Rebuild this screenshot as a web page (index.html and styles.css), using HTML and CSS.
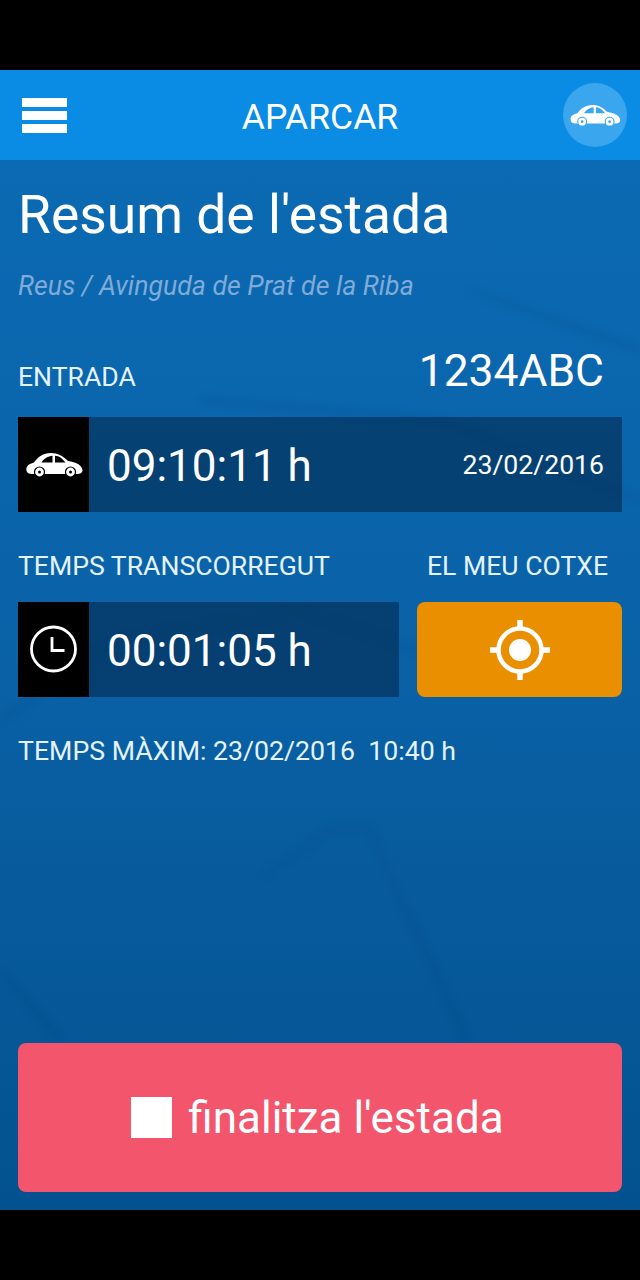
FILE: index.html
```html
<!DOCTYPE html>
<html lang="ca">
<head>
    <meta charset="UTF-8">
    <meta name="viewport" content="width=device-width, initial-scale=1.0">
    <title>Aparcar</title>
    <link rel="stylesheet" href="styles.css">
</head>
<body>

<svg class="defs" width="0" height="0">
    <symbol id="car" viewBox="0 0 58 26">
        <path d="M2 20C0 15 3 12 9 10.500C13 5 18 1 26 1C33 1 38 4 43 9C51 10 57 13 57.500 18C57.500 21 55 22 52 22H7C4 22 3 21 2 20Z" fill="#fff"/>
        <path d="M16.500 10.500C19 6.500 23 4 27.500 3.700V10.500ZM30 3.700C34 4 37 6 40.500 10.500H30Z" fill="var(--glass)"/>
        <circle cx="14.500" cy="20" r="5.600" fill="var(--glass)"/>
        <circle cx="14.500" cy="20" r="4.400" fill="#fff"/>
        <circle cx="14.500" cy="20" r="1.500" fill="var(--glass)"/>
        <circle cx="45.500" cy="20" r="5.600" fill="var(--glass)"/>
        <circle cx="45.500" cy="20" r="4.400" fill="#fff"/>
        <circle cx="45.500" cy="20" r="1.500" fill="var(--glass)"/>
    </symbol>
</svg>

<div class="black-bar top"></div>

<div class="navbar">
    <div class="menu-icon">
        <div></div>
        <div></div>
        <div></div>
    </div>
    <h1>APARCAR</h1>
    <div class="car-badge">
        <svg width="52" height="23"><use href="#car"/></svg>
    </div>
</div>

<div class="content">
    <svg class="map-lines" viewBox="0 0 640 1050" preserveAspectRatio="none">
        <path d="M0 810L60 880M367 667L467 880M260 720L330 670L367 667M470 130L640 190M200 240L440 260L640 340M0 560L120 480L300 450L500 520" fill="none" stroke="#033c6e" stroke-width="5"/>
    </svg>

    <h2 class="title">Resum de l'estada</h2>
    <p class="place">Reus / Avinguda de Prat de la Riba</p>

    <div class="entry-head">
        <span class="label entry-label">ENTRADA</span>
        <span class="plate">1234ABC</span>
    </div>
    <div class="time-box">
        <div class="time-icon">
            <svg width="58" height="26"><use href="#car"/></svg>
        </div>
        <span class="time">09:10:11 h</span>
        <span class="date">23/02/2016</span>
    </div>

    <div class="two-cols">
        <div class="col-left">
            <span class="label">TEMPS TRANSCORREGUT</span>
            <div class="time-box">
                <div class="time-icon">
                    <svg width="50" height="50" viewBox="0 0 50 50">
                        <circle cx="24.500" cy="24" r="22" fill="none" stroke="#fff" stroke-width="2.800"/>
                        <path d="M23 12V25.500H35.500" fill="none" stroke="#fff" stroke-width="2.800"/>
                    </svg>
                </div>
                <span class="time">00:01:05 h</span>
            </div>
        </div>
        <div class="col-right">
            <span class="label">EL MEU COTXE</span>
            <div class="locate-btn">
                <svg width="60" height="60" viewBox="0 0 60 60">
                    <circle cx="30" cy="30" r="21.500" fill="none" stroke="#fff" stroke-width="4.500"/>
                    <circle cx="30" cy="30" r="11" fill="#fff"/>
                    <path d="M30 0V10M30 50V60M0 30H10M50 30H60" stroke="#fff" stroke-width="5.500"/>
                </svg>
            </div>
        </div>
    </div>

    <p class="max-time">TEMPS MÀXIM: 23/02/2016&nbsp; 10:40 h</p>

    <div class="stop-btn">
        <div class="stop-square"></div>
        <span>finalitza l'estada</span>
    </div>
</div>

<div class="black-bar bottom"></div>

</body>
</html>
```

FILE: styles.css
```css
body {
    margin: 0;
    font-family: Roboto, Arial, sans-serif;
    background-color: #000;
    color: #fff;
    height: 1280px;
    display: flex;
    flex-direction: column;
    overflow: hidden;
}
.defs {
    position: absolute;
}
.black-bar.top {
    height: 70px;
}
.black-bar.bottom {
    height: 70px;
}
.navbar {
    height: 90px;
    flex: none;
    background-color: #0a8be4;
    display: flex;
    align-items: center;
    justify-content: space-between;
    padding: 0 13px 0 22px;
    position: relative;
    --glass: #3aa6ee;
}
.navbar h1 {
    margin: 0;
    font-size: 35.5px;
    font-weight: 400;
    position: absolute;
    left: 0;
    right: 0;
    top: 0;
    text-align: center;
    line-height: 94px;
}
.menu-icon {
    width: 45px;
    height: 35px;
    display: flex;
    flex-direction: column;
    justify-content: space-between;
}
.menu-icon div {
    background-color: #fff;
    height: 9px;
}
.car-badge {
    width: 64px;
    height: 64px;
    border-radius: 50%;
    background-color: #3aa6ee;
    display: flex;
    align-items: center;
    justify-content: center;
}
.content {
    flex: 1;
    position: relative;
    background: linear-gradient(#0b6ab3 0%, #0a62a7 45%, #03528f 100%);
    padding: 0 18px;
    display: flex;
    flex-direction: column;
    overflow: hidden;
    --glass: #000;
}
.map-lines {
    position: absolute;
    left: 0;
    top: 0;
    width: 100%;
    height: 100%;
    filter: blur(4px);
    opacity: .18;
}
.content > *:not(.map-lines) {
    position: relative;
}
.title {
    margin: 24px 0 0;
    font-size: 53.4px;
    font-weight: 400;
    line-height: 62px;
}
.place {
    margin: 24px 0 0;
    font-size: 26.7px;
    font-style: italic;
    line-height: 32px;
    color: #7fabd8;
}
.entry-head {
    display: flex;
    justify-content: space-between;
    align-items: flex-end;
    padding-right: 18px;
    margin-top: 43px;
    height: 52px;
}
.label {
    font-size: 26.6px;
    line-height: 30px;
    color: #e4f3ff;
}
.entry-label {
    margin-bottom: 5px;
}
.plate {
    font-size: 44.4px;
    line-height: 52px;
}
.time-box {
    height: 95px;
    display: flex;
    align-items: center;
    background-color: rgba(3, 40, 76, .58);
}
.entry-head + .time-box {
    margin-top: 20px;
}
.time-icon {
    width: 71px;
    height: 100%;
    background-color: #000;
    display: flex;
    align-items: center;
    justify-content: center;
    flex: none;
}
.time {
    font-size: 44px;
    margin-left: 18px;
    padding-top: 2px;
}
.date {
    font-size: 26.6px;
    margin-left: auto;
    padding-right: 18px;
}
.two-cols {
    display: flex;
    gap: 18px;
    margin-top: 39px;
}
.col-left {
    width: 381px;
}
.col-right {
    flex: 1;
}
.col-left .label, .col-right .label {
    display: block;
    margin-bottom: 21px;
}
.col-right .label {
    text-align: center;
    padding-right: 4px;
}
.locate-btn {
    height: 95px;
    background-color: #e98f00;
    border-radius: 8px;
    display: flex;
    align-items: center;
    justify-content: center;
}
.max-time {
    margin: 39px 0 0;
    font-size: 26.7px;
    line-height: 30px;
    color: #e4f3ff;
}
.stop-btn {
    margin-top: auto;
    margin-bottom: 18px;
    height: 149px;
    padding-right: 5px;
    background-color: #f2556c;
    border-radius: 8px;
    display: flex;
    align-items: center;
    justify-content: center;
    gap: 16px;
    font-size: 44px;
}
.stop-square {
    width: 41px;
    height: 41px;
    background-color: #fff;
}
```
